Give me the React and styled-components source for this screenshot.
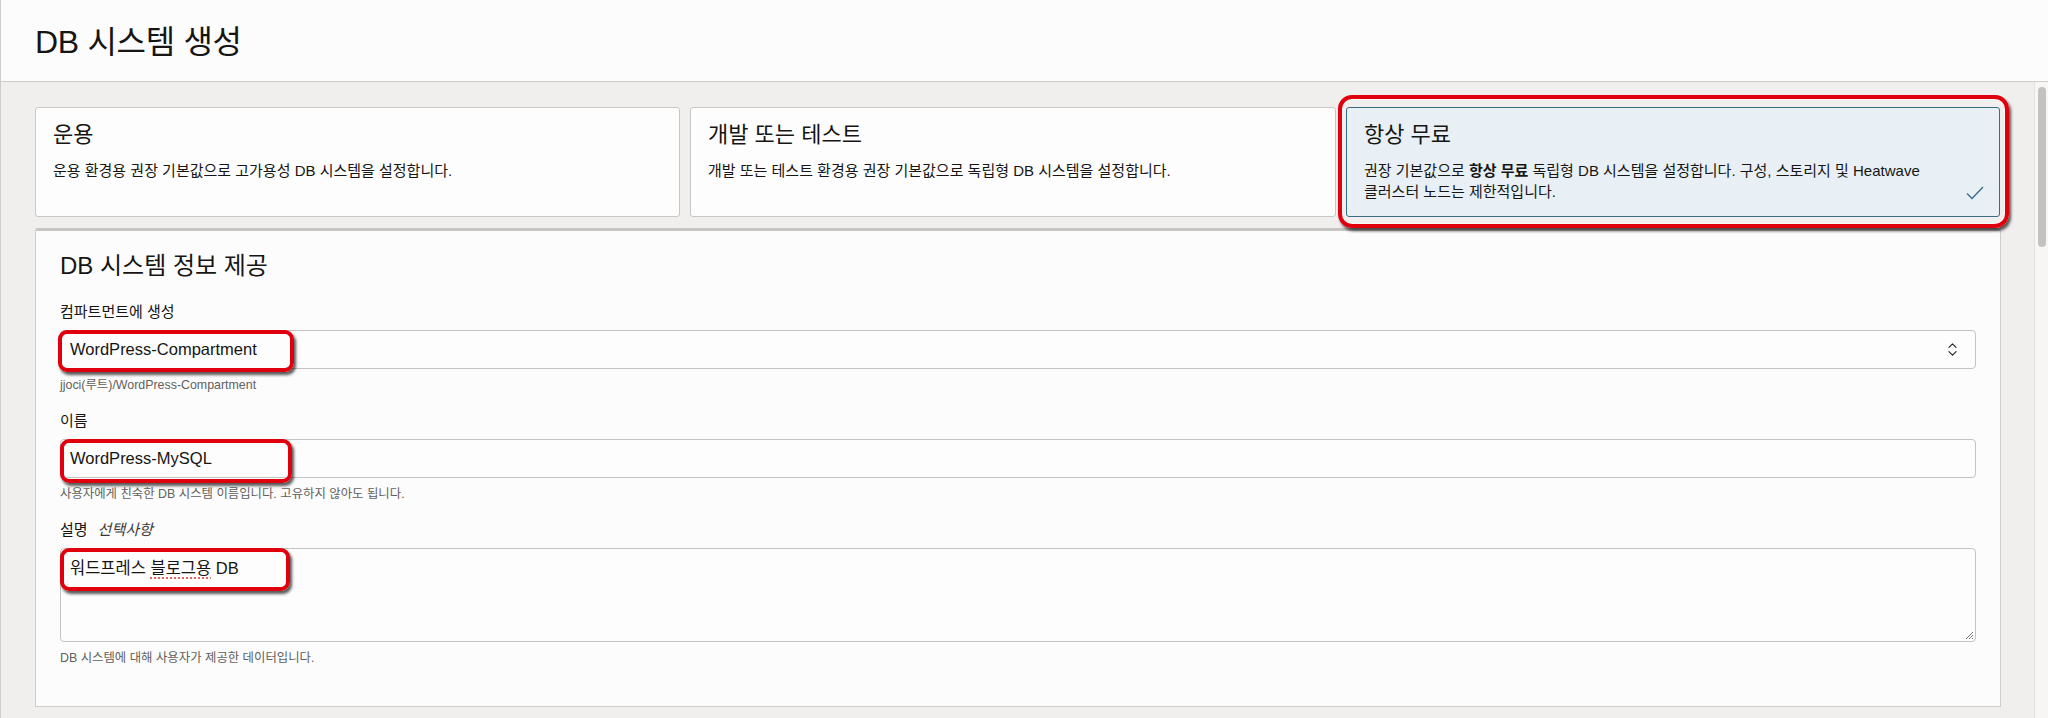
import React from 'react';
import styled, { createGlobalStyle } from 'styled-components';
import { ChevronsUpDown } from 'lucide-react';

const GlobalStyle = createGlobalStyle`
  html, body {
    margin: 0;
    padding: 0;
    background: #f1efed;
  }
  body {
    font-family: "Liberation Sans", "Noto Sans CJK KR", sans-serif;
    color: #161513;
  }
`;

const Page = styled.div`
  width: 2048px;
  height: 718px;
  overflow: hidden;
  display: flex;
  flex-direction: column;
  border-left: 1px solid #cfcdca;
  box-sizing: border-box;
`;

const Header = styled.header`
  height: 82px;
  flex-shrink: 0;
  background: #fcfcfc;
  border-bottom: 1px solid #cfcdca;
  box-sizing: border-box;
  display: flex;
  align-items: center;
  padding: 0 0 4px 34px;

  h1 {
    margin: 0;
    font-size: 32px;
    font-weight: 400;
    letter-spacing: -0.3px;
  }
`;

const Body = styled.div`
  flex: 1;
  display: flex;
  min-height: 0;
`;

const Main = styled.main`
  flex: 1;
  padding: 25px 33px 0 34px;
  display: flex;
  flex-direction: column;
  gap: 11px;
`;

const Scrollbar = styled.div`
  width: 14px;
  flex-shrink: 0;
  background: #f7f6f5;
  border-left: 1px solid #e4e2e0;
  padding: 5px 2px 0 3px;
  box-sizing: border-box;

  div {
    height: 160px;
    border-radius: 4px;
    background: #c3c2c1;
  }
`;

const Cards = styled.div`
  display: grid;
  grid-template-columns: 645px 646px 654px;
  gap: 10px;
`;

const Card = styled.div`
  position: relative;
  height: 110px;
  box-sizing: border-box;
  padding: 13px 17px 0 17px;
  border-radius: 3px;
  background: ${p => (p.$selected ? '#e8f0f5' : '#fdfdfd')};
  border: 1px solid ${p => (p.$selected ? '#3d6c86' : '#c9c7c4')};

  h3 {
    margin: 0;
    font-size: 22px;
    font-weight: 400;
    line-height: 28px;
  }

  p {
    margin: 11px 0 0;
    font-size: 15px;
    line-height: 21px;
  }

  b {
    font-weight: 700;
  }
`;

const Check = styled.svg`
  position: absolute;
  right: 15px;
  bottom: 16px;
`;

const Callout = styled.span`
  position: absolute;
  top: ${p => p.$top}px;
  left: ${p => p.$left}px;
  width: ${p => (p.$w ? `${p.$w}px` : 'auto')};
  height: ${p => (p.$h ? `${p.$h}px` : 'auto')};
  right: ${p => (p.$right !== undefined ? `${p.$right}px` : 'auto')};
  bottom: ${p => (p.$bottom !== undefined ? `${p.$bottom}px` : 'auto')};
  border: 4px solid #e0000d;
  border-radius: ${p => p.$radius || 9}px;
  box-shadow: 2px 3px 3px rgba(0, 0, 0, 0.65), inset 0 0 0 1px rgba(255, 255, 255, 0.6);
  pointer-events: none;
  box-sizing: border-box;
`;

const Panel = styled.section`
  flex: 1;
  background: #fcfcfc;
  border: 1px solid #cfcdca;
  border-top: 3px solid #c7c5c2;
  border-radius: 3px 3px 0 0;
  padding: 20px 24px 0 24px;
  box-sizing: border-box;
  margin-bottom: 11px;

  h2 {
    margin: 0 0 21px;
    font-size: 24px;
    font-weight: 400;
    line-height: 30px;
  }
`;

const Field = styled.div`
  margin-bottom: 18px;
`;

const Label = styled.div`
  font-size: 15px;
  line-height: 20px;
  margin-bottom: 8px;

  i {
    margin-left: 10px;
    font-style: italic;
    color: #3c3a38;
  }
`;

const Control = styled.div`
  position: relative;
  height: ${p => p.$h || 39}px;
  box-sizing: border-box;
  border: 1px solid #c6c4c1;
  border-radius: 4px;
  background: #fdfdfd;
  display: flex;
  align-items: ${p => (p.$multi ? 'flex-start' : 'center')};
  justify-content: space-between;
  padding: ${p => (p.$multi ? '6px 9px' : '0 14px 0 9px')};
  font-size: 16.5px;
  color: #161513;
`;

const Spell = styled.span`
  text-decoration: underline dotted #d6453d;
  text-underline-offset: 4px;
`;

const Grip = styled.svg`
  position: absolute;
  right: 1px;
  bottom: 1px;
`;

const Help = styled.div`
  font-size: 12.4px;
  line-height: 16px;
  color: #625f5c;
  margin-top: 8px;
`;

export default function App() {
  return (
    <>
      <GlobalStyle />
      <Page>
        <Header>
          <h1>DB 시스템 생성</h1>
        </Header>
        <Body>
          <Main>
            <Cards>
              <Card>
                <h3>운용</h3>
                <p>운용 환경용 권장 기본값으로 고가용성 DB 시스템을 설정합니다.</p>
              </Card>
              <Card>
                <h3>개발 또는 테스트</h3>
                <p>개발 또는 테스트 환경용 권장 기본값으로 독립형 DB 시스템을 설정합니다.</p>
              </Card>
              <Card $selected>
                <h3>항상 무료</h3>
                <p>
                  권장 기본값으로 <b>항상 무료</b> 독립형 DB 시스템을 설정합니다. 구성, 스토리지 및 Heatwave
                  <br />
                  클러스터 노드는 제한적입니다.
                </p>
                <Check width="18" height="14" viewBox="0 0 18 14">
                  <path d="M1 7.5 L6 12.5 L17 1" fill="none" stroke="#3a6a86" strokeWidth="1.3" />
                </Check>
                <Callout $top={-13} $left={-9} $right={-10} $bottom={-12} $radius={14} />
              </Card>
            </Cards>

            <Panel>
              <h2>DB 시스템 정보 제공</h2>

              <Field>
                <Label>컴파트먼트에 생성</Label>
                <Control>
                  <span>WordPress-Compartment</span>
                  <ChevronsUpDown size={17} strokeWidth={1.6} color="#222" />
                  <Callout $top={-1} $left={-3} $w={236} $h={42} />
                </Control>
                <Help>jjoci(루트)/WordPress-Compartment</Help>
              </Field>

              <Field>
                <Label>이름</Label>
                <Control>
                  <span>WordPress-MySQL</span>
                  <Callout $top={-1} $left={-1} $w={232} $h={44} />
                </Control>
                <Help>사용자에게 친숙한 DB 시스템 이름입니다. 고유하지 않아도 됩니다.</Help>
              </Field>

              <Field>
                <Label>
                  설명<i>선택사항</i>
                </Label>
                <Control $multi $h={94}>
                  <span>
                    워드프레스 <Spell>블로그용</Spell> DB
                  </span>
                  <Grip width="10" height="10" viewBox="0 0 10 10">
                    <path d="M9 2 L2 9 M9 5 L5 9 M9 8 L8 9" stroke="#777" strokeWidth="1" />
                  </Grip>
                  <Callout $top={-1} $left={-1} $w={230} $h={43} />
                </Control>
                <Help>DB 시스템에 대해 사용자가 제공한 데이터입니다.</Help>
              </Field>
            </Panel>
          </Main>
          <Scrollbar>
            <div />
          </Scrollbar>
        </Body>
      </Page>
    </>
  );
}
